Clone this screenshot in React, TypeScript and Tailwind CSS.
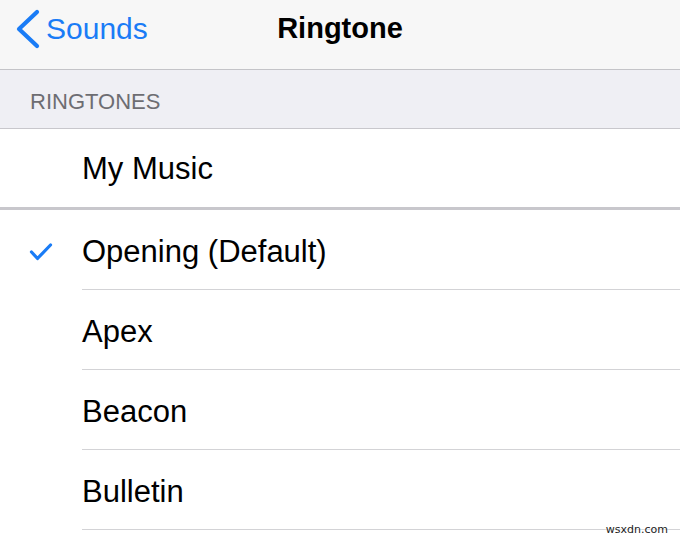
import React from 'react';

const ringtones = [
  { name: 'Opening (Default)', selected: true },
  { name: 'Apex', selected: false },
  { name: 'Beacon', selected: false },
  { name: 'Bulletin', selected: false },
];

const font = { fontFamily: '"Liberation Sans", Arial, sans-serif' };

const App: React.FC = () => {
  return (
    <div className="relative min-h-screen w-full overflow-hidden bg-white" style={font}>
      {/* Navigation bar */}
      <div className="relative flex h-[70px] items-center border-b border-[#c4c4c8] bg-[#f7f7f7] pb-[12px]">
        <button className="flex items-center pl-[15px] text-[#1a7cf6]">
          <svg width="26" height="40" viewBox="0 0 26 40">
            <path
              d="M22 3 L4 20 L22 37"
              fill="none"
              stroke="currentColor"
              strokeWidth="4.2"
              strokeLinecap="round"
              strokeLinejoin="round"
            />
          </svg>
          <span className="ml-[5px] text-[30px] leading-none">Sounds</span>
        </button>
        <h1 className="absolute left-0 right-0 text-center text-[29px] font-bold leading-none text-black">
          Ringtone
        </h1>
      </div>

      {/* Section header */}
      <div className="flex h-[59px] items-end border-b border-[#c8c7cc] bg-[#efeff4] pb-[15px] pl-[30px]">
        <span className="text-[22px] leading-none text-[#6d6d72]">RINGTONES</span>
      </div>

      {/* Music library row */}
      <div className="flex h-[81px] items-center border-b-[3px] border-[#c8c7cc] pl-[82px]">
        <span className="text-[31px] leading-none text-black">My Music</span>
      </div>

      {/* Tone list */}
      <ul>
        {ringtones.map((tone) => (
          <li key={tone.name} className="flex h-[80px] items-stretch">
            <div className="flex w-[82px] items-center justify-start pl-[29px] pt-[4px]">
              {tone.selected && (
                <svg width="24" height="20" viewBox="0 0 24 20" className="text-[#1a7cf6]">
                  <path
                    d="M2.5 10 L8.5 16.5 L21.5 3"
                    fill="none"
                    stroke="currentColor"
                    strokeWidth="3.2"
                    strokeLinecap="round"
                    strokeLinejoin="round"
                  />
                </svg>
              )}
            </div>
            <div className="flex flex-1 items-center border-b border-[#d3d3d6] pt-[4px]">
              <span className="text-[31px] leading-none text-black">{tone.name}</span>
            </div>
          </li>
        ))}
      </ul>

      {/* Site watermark */}
      <span
        className="absolute bottom-[2px] right-[12px] text-[11px] leading-none text-[#222]"
        style={{ fontFamily: '"DejaVu Sans", Verdana, sans-serif', textShadow: '0 0 3px #fff, 0 0 3px #fff' }}
      >
        wsxdn.com
      </span>
    </div>
  );
};

export default App;
